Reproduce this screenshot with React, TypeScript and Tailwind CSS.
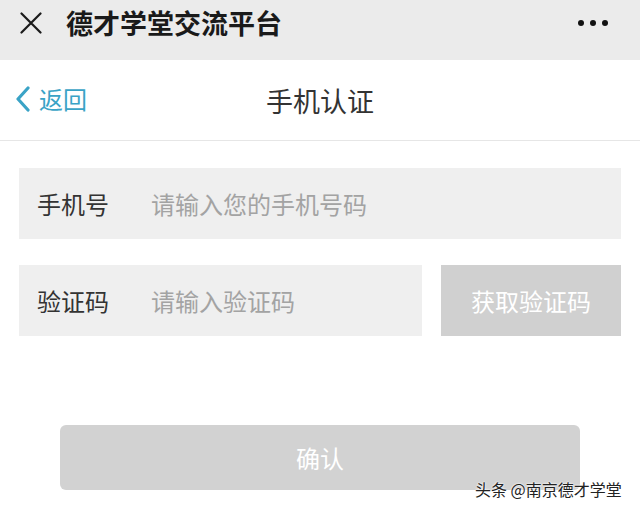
import React from "react";

const font = { fontFamily: '"Noto Sans CJK SC", "Noto Sans", sans-serif' };

export default function App() {
  return (
    <div className="relative w-[640px] h-[514px] bg-white overflow-hidden" style={font}>
      {/* wechat top bar */}
      <div className="h-[60px] bg-[#ebebeb] flex items-start pl-[20px] pr-[32px]">
        <svg width="22" height="22" viewBox="0 0 22 22" className="shrink-0 mt-[12px]">
          <path d="M1.5 1.5 L20.5 20.5 M20.5 1.5 L1.5 20.5" stroke="#1a1a1a" strokeWidth="2.2" strokeLinecap="round" />
        </svg>
        <div className="ml-[24px] mt-[9px] text-[27px] font-bold text-[#1a1a1a] leading-none">
          德才学堂交流平台
        </div>
        <div className="ml-auto mt-[20px] flex gap-[6px]">
          <span className="w-[6px] h-[6px] rounded-full bg-[#111]" />
          <span className="w-[6px] h-[6px] rounded-full bg-[#111]" />
          <span className="w-[6px] h-[6px] rounded-full bg-[#111]" />
        </div>
      </div>

      {/* page nav */}
      <div className="relative h-[81px] border-b border-[#e6e6e6] flex items-center justify-center">
        <button className="absolute left-[14px] top-[26px] flex items-center text-[#3aa3c6]">
          <svg width="20" height="26" viewBox="0 0 20 26">
            <path d="M14 2 L4 13 L14 24" stroke="#3aa3c6" strokeWidth="3.2" fill="none" strokeLinecap="round" strokeLinejoin="round" />
          </svg>
          <span className="ml-[5px] text-[24px] leading-none">返回</span>
        </button>
        <h1 className="text-[27px] text-[#333] leading-none">手机认证</h1>
      </div>

      {/* form */}
      <div className="px-[19px] pt-[27px] flex flex-col gap-[26px]">
        <div className="h-[71px] bg-[#efefef] flex items-center pl-[18px]">
          <span className="w-[114px] text-[24px] text-[#333]">手机号</span>
          <span className="text-[24px] text-[#a3a3a3]">请输入您的手机号码</span>
        </div>
        <div className="flex gap-[19px]">
          <div className="flex-1 h-[71px] bg-[#efefef] flex items-center pl-[18px]">
            <span className="w-[114px] text-[24px] text-[#333]">验证码</span>
            <span className="text-[24px] text-[#a3a3a3]">请输入验证码</span>
          </div>
          <div className="w-[180px] h-[71px] bg-[#d0d0d0] flex items-center justify-center text-[24px] text-white">
            获取验证码
          </div>
        </div>
      </div>

      <div className="px-[60px] pt-[89px]">
        <div className="h-[65px] rounded-[6px] bg-[#d2d2d2] flex items-center justify-center text-[24px] text-white">
          确认
        </div>
      </div>

      {/* watermark */}
      <div
        className="absolute left-[475px] top-[481px] text-[16px] text-[#222] leading-none"
        style={{ textShadow: "0 0 2px #fff, 0 0 2px #fff" }}
      >
        头条 @南京德才学堂
      </div>
    </div>
  );
}
